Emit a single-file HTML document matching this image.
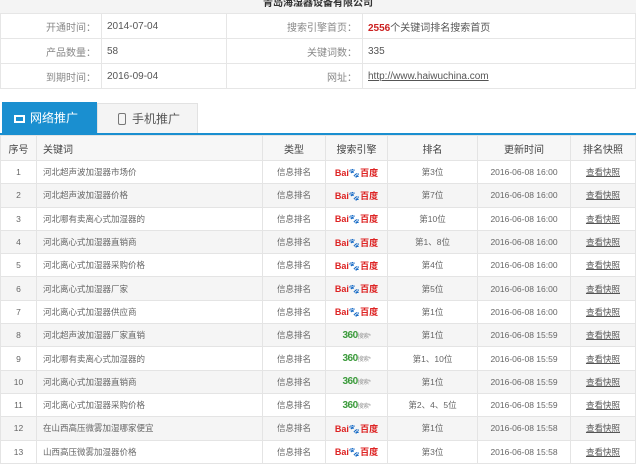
<!DOCTYPE html>
<html><head><meta charset="utf-8"><style>
*{margin:0;padding:0;box-sizing:border-box}
body{width:636px;height:465px;overflow:hidden;background:#fff;font-family:"Liberation Sans","Noto Sans CJK SC",sans-serif;color:#555;position:relative}
.a{position:absolute}
.info td{border:1px solid #e6e6e6;font-size:10px;height:25px;padding:0 5px;vertical-align:middle}
table{border-collapse:collapse}
.g td{border:1px solid #e4e4e4;font-size:8.5px;height:23.3px;text-align:center;color:#666;padding:0;vertical-align:middle}
.g tr:nth-child(odd) td{background:#f5f5f5}
.g th{font-size:10px;font-weight:normal;color:#444;height:25px;border:1px solid #e4e4e4;background:#f7f7f7}
.g td.kw{text-align:left;padding-left:6px}
.g td.bd{font-weight:bold;color:#d22;font-size:9px}
.bd i{font-style:normal;color:#2b5bd6}
.g td.q{color:#3a9a3a;font-weight:bold;font-size:10px;letter-spacing:-0.5px}
.q small{font-size:6px;color:#999;font-weight:normal}
u{color:#555}
</style></head><body>
<div class="a" style="left:0;top:0;width:636px;height:13px;background:#f4f4f4;text-align:center;font-size:10px;line-height:8px;color:#333;font-weight:bold">青岛海湿器设备有限公司</div>
<table class="info a" style="left:0;top:13px;width:636px">
<tr><td style="width:101px;text-align:right;color:#888">开通时间：</td><td style="width:125px">2014-07-04</td><td style="width:136px;text-align:right;color:#888">搜索引擎首页：</td><td><b style="color:#c22">2556</b>个关键词排名搜索首页</td></tr>
<tr><td style="text-align:right;color:#888">产品数量：</td><td>58</td><td style="text-align:right;color:#888">关键词数：</td><td>335</td></tr>
<tr><td style="text-align:right;color:#888">到期时间：</td><td>2016-09-04</td><td style="text-align:right;color:#888">网址：</td><td><u>http://www.haiwuchina.com</u></td></tr>
</table>
<div class="a" style="left:2px;top:102px;width:95px;height:33px;background:#1a8fd0;color:#fff;font-size:12px;line-height:33px;padding-left:12px"><span style="display:inline-block;width:11px;height:8px;border:2px solid #fff;vertical-align:-1px;margin-right:5px"></span>网络推广</div>
<div class="a" style="left:97px;top:103px;width:101px;height:32px;background:#f4f4f4;border:1px solid #e2e2e2;color:#555;font-size:12px;line-height:30px;padding-left:20px"><span style="display:inline-block;width:8px;height:12px;border:1.5px solid #777;border-radius:2px;vertical-align:-2px;margin-right:6px"></span>手机推广</div>
<div class="a" style="left:0;top:133px;width:636px;height:2px;background:#1a8fd0"></div>
<table class="g a" style="left:0;top:135px;width:636px;table-layout:fixed">
<tr><th style="width:36px">序号</th><th style="width:226px;text-align:left;padding-left:6px">关键词</th><th style="width:63px">类型</th><th style="width:62px">搜索引擎</th><th style="width:90px">排名</th><th style="width:93px">更新时间</th><th>排名快照</th></tr>
<tr><td>1</td><td class="kw">河北超声波加湿器市场价</td><td>信息排名</td><td class="bd">Bai<i>🐾</i>百度</td><td>第3位</td><td>2016-06-08 16:00</td><td><u>查看快照</u></td></tr>
<tr><td>2</td><td class="kw">河北超声波加湿器价格</td><td>信息排名</td><td class="bd">Bai<i>🐾</i>百度</td><td>第7位</td><td>2016-06-08 16:00</td><td><u>查看快照</u></td></tr>
<tr><td>3</td><td class="kw">河北哪有卖离心式加湿器的</td><td>信息排名</td><td class="bd">Bai<i>🐾</i>百度</td><td>第10位</td><td>2016-06-08 16:00</td><td><u>查看快照</u></td></tr>
<tr><td>4</td><td class="kw">河北离心式加湿器直销商</td><td>信息排名</td><td class="bd">Bai<i>🐾</i>百度</td><td>第1、8位</td><td>2016-06-08 16:00</td><td><u>查看快照</u></td></tr>
<tr><td>5</td><td class="kw">河北离心式加湿器采购价格</td><td>信息排名</td><td class="bd">Bai<i>🐾</i>百度</td><td>第4位</td><td>2016-06-08 16:00</td><td><u>查看快照</u></td></tr>
<tr><td>6</td><td class="kw">河北离心式加湿器厂家</td><td>信息排名</td><td class="bd">Bai<i>🐾</i>百度</td><td>第5位</td><td>2016-06-08 16:00</td><td><u>查看快照</u></td></tr>
<tr><td>7</td><td class="kw">河北离心式加湿器供应商</td><td>信息排名</td><td class="bd">Bai<i>🐾</i>百度</td><td>第1位</td><td>2016-06-08 16:00</td><td><u>查看快照</u></td></tr>
<tr><td>8</td><td class="kw">河北超声波加湿器厂家直销</td><td>信息排名</td><td class="q">360<small>搜索*</small></td><td>第1位</td><td>2016-06-08 15:59</td><td><u>查看快照</u></td></tr>
<tr><td>9</td><td class="kw">河北哪有卖离心式加湿器的</td><td>信息排名</td><td class="q">360<small>搜索*</small></td><td>第1、10位</td><td>2016-06-08 15:59</td><td><u>查看快照</u></td></tr>
<tr><td>10</td><td class="kw">河北离心式加湿器直销商</td><td>信息排名</td><td class="q">360<small>搜索*</small></td><td>第1位</td><td>2016-06-08 15:59</td><td><u>查看快照</u></td></tr>
<tr><td>11</td><td class="kw">河北离心式加湿器采购价格</td><td>信息排名</td><td class="q">360<small>搜索*</small></td><td>第2、4、5位</td><td>2016-06-08 15:59</td><td><u>查看快照</u></td></tr>
<tr><td>12</td><td class="kw">在山西高压微雾加湿哪家便宜</td><td>信息排名</td><td class="bd">Bai<i>🐾</i>百度</td><td>第1位</td><td>2016-06-08 15:58</td><td><u>查看快照</u></td></tr>
<tr><td>13</td><td class="kw">山西高压微雾加湿器价格</td><td>信息排名</td><td class="bd">Bai<i>🐾</i>百度</td><td>第3位</td><td>2016-06-08 15:58</td><td><u>查看快照</u></td></tr>
</table>
</body></html>
